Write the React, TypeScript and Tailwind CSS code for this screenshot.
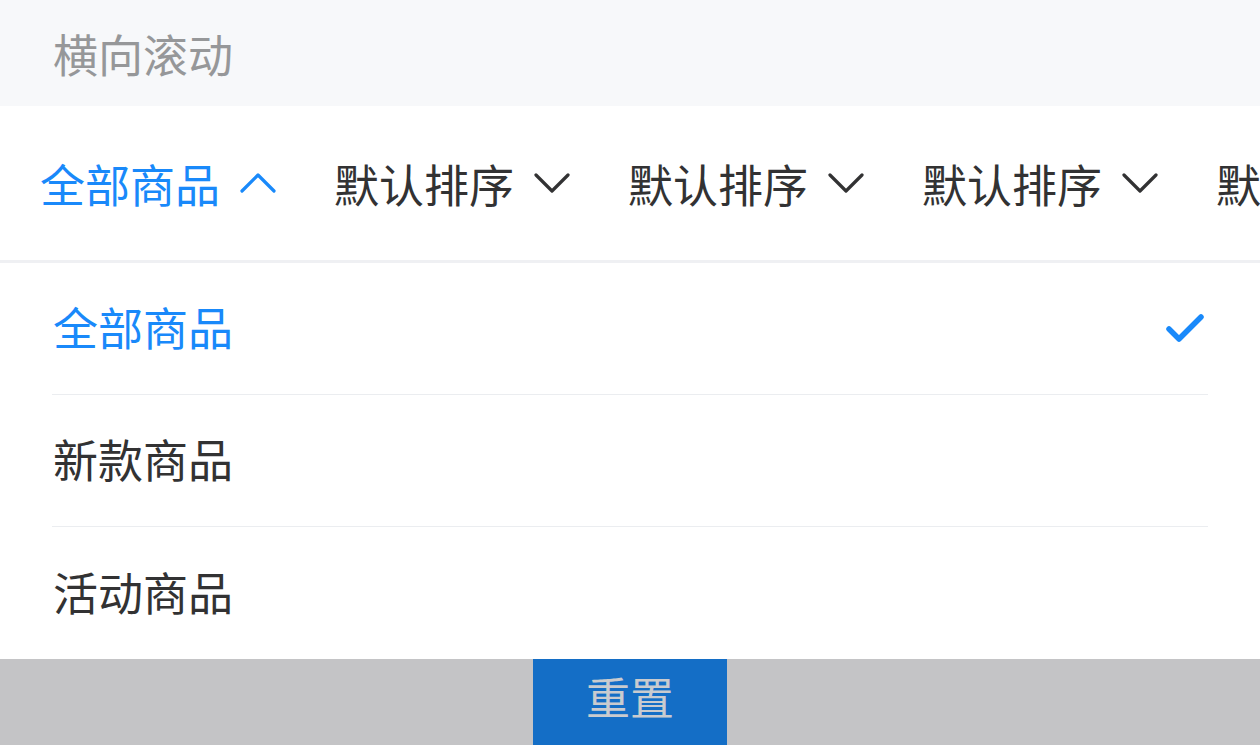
import { useState } from "react";

const tabs = ["全部商品", "默认排序", "默认排序", "默认排序", "默认排序"];
const options = ["全部商品", "新款商品", "活动商品"];

function Chevron({ up, className }: { up?: boolean; className?: string }) {
  return (
    <svg width="36" height="22" viewBox="0 0 36 22" fill="none" className={className}>
      <polyline
        points={up ? "2,19 18,3 34,19" : "2,3 18,19 34,3"}
        stroke="currentColor"
        strokeWidth="3.2"
        strokeLinecap="round"
        strokeLinejoin="round"
      />
    </svg>
  );
}

function Check() {
  return (
    <svg width="38" height="30" viewBox="0 0 38 30" fill="none" className="text-[#1989fa]">
      <polyline
        points="3,15 13,25 35,3"
        stroke="currentColor"
        strokeWidth="5.5"
        strokeLinecap="round"
        strokeLinejoin="round"
      />
    </svg>
  );
}

export default function App() {
  const [selected, setSelected] = useState(0);

  return (
    <div
      className="flex h-[745px] w-[1260px] flex-col overflow-hidden bg-white"
      style={{ fontFamily: '"Noto Sans CJK SC", "Noto Sans", sans-serif' }}
    >
      <header className="flex h-[106px] shrink-0 items-center bg-[#f7f8fa] px-[53px]">
        <h2 className="text-[45px] leading-none text-[#969799]">横向滚动</h2>
      </header>

      <nav className="flex h-[157px] shrink-0 items-center gap-[58px] overflow-hidden border-b-[3px] border-[#eff0f3] bg-white pl-[40px]">
        {tabs.map((label, i) => {
          const isActive = i === 0;
          return (
            <button
              key={i}
              type="button"
              className={`flex shrink-0 items-center gap-[20px] whitespace-nowrap text-[45px] leading-none ${
                isActive ? "text-[#1989fa]" : "text-[#323233]"
              }`}
            >
              <span>{label}</span>
              <Chevron up={isActive} />
            </button>
          );
        })}
      </nav>

      <ul className="flex shrink-0 flex-col bg-white">
        {options.map((label, i) => (
          <li
            key={label}
            onClick={() => setSelected(i)}
            className={`mx-[52px] flex h-[132px] items-center justify-between ${
              i < options.length - 1 ? "border-b border-[#ebedf0]" : ""
            }`}
          >
            <span
              className={`pb-[4px] pl-px text-[45px] leading-none ${
                i === selected ? "text-[#1989fa]" : "text-[#323233]"
              }`}
            >
              {label}
            </span>
            {i === selected ? (
              <span className="mr-[4px]">
                <Check />
              </span>
            ) : null}
          </li>
        ))}
      </ul>

      <div className="flex flex-1 justify-center bg-[#c4c4c6]">
        <button
          type="button"
          className="flex h-full w-[194px] items-start justify-center bg-[#146ec6] pt-[15px] text-[44px] leading-none text-[#c9cbcf]"
        >
          重置
        </button>
      </div>
    </div>
  );
}
